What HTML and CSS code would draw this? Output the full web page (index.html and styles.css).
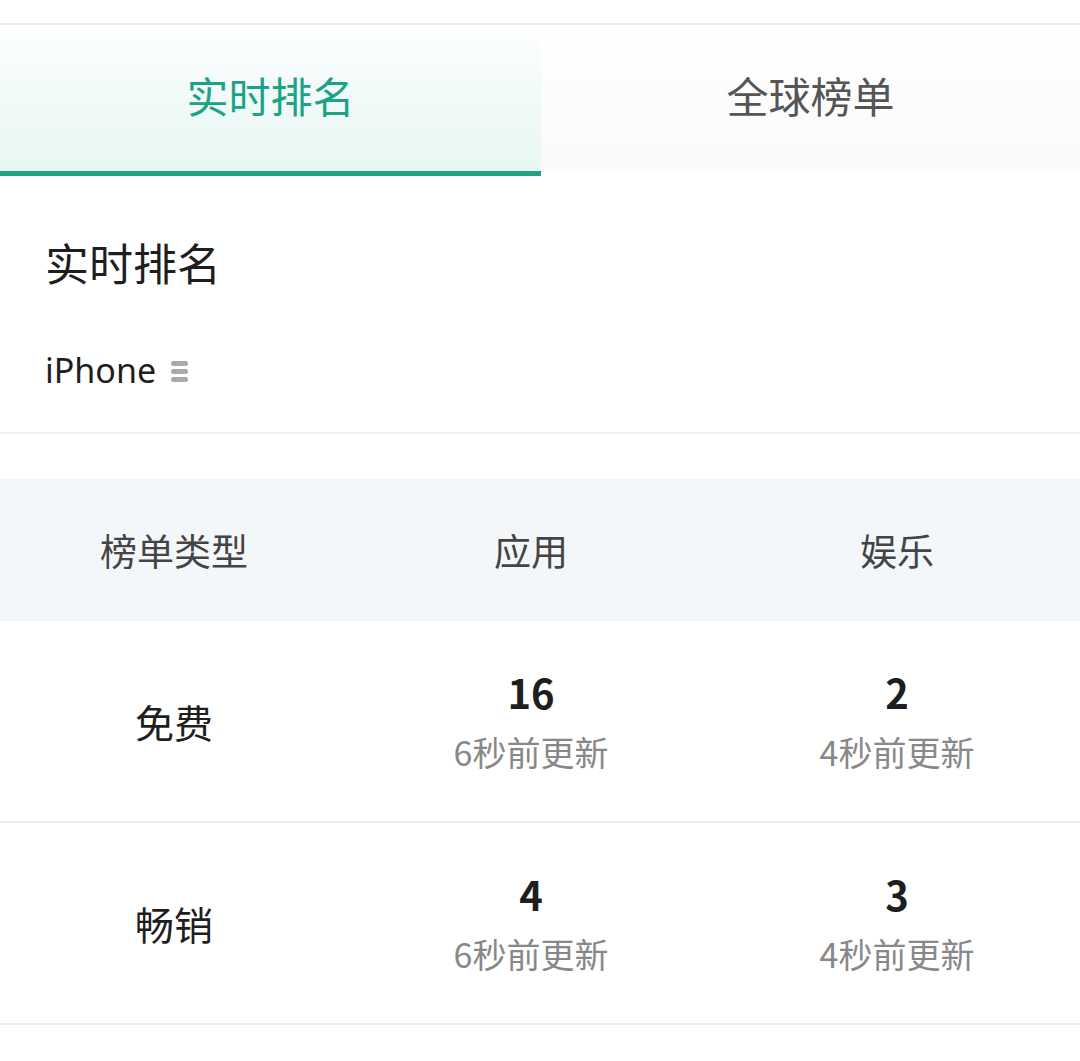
FILE: index.html
```html
<!DOCTYPE html>
<html lang="zh-CN">
<head>
<meta charset="utf-8">
<link rel="stylesheet" href="styles.css">
</head>
<body>
<div class="page">
  <div class="topbar"></div>
  <div class="tabs">
    <div class="tab active">实时排名</div>
    <div class="tab">全球榜单</div>
  </div>
  <div class="intro">
    <div class="title">实时排名</div>
    <div class="device">
      <span>iPhone</span>
      <span class="menu-icon"><i></i><i></i><i></i></span>
    </div>
  </div>
  <div class="table">
    <div class="row head">
      <div class="cell">榜单类型</div>
      <div class="cell">应用</div>
      <div class="cell">娱乐</div>
    </div>
    <div class="row body">
      <div class="cell label">免费</div>
      <div class="cell stat"><div class="num">16</div><div class="sub">6秒前更新</div></div>
      <div class="cell stat"><div class="num">2</div><div class="sub">4秒前更新</div></div>
    </div>
    <div class="row body">
      <div class="cell label">畅销</div>
      <div class="cell stat"><div class="num">4</div><div class="sub">6秒前更新</div></div>
      <div class="cell stat"><div class="num">3</div><div class="sub">4秒前更新</div></div>
    </div>
  </div>
</div>
</body>
</html>
```

FILE: styles.css
```css
* { box-sizing: border-box; }
html, body { margin: 0; padding: 0; background: #ffffff; }
body {
  font-family: "Noto Sans CJK SC", "Noto Sans", sans-serif;
  color: #222222;
}
.page { width: 1080px; }
.topbar {
  height: 25px;
  border-bottom: 2px solid #ececec;
}
.tabs {
  display: grid;
  grid-template-columns: 541px 1fr;
  height: 151px;
}
.tab {
  display: flex;
  align-items: center;
  justify-content: center;
  padding-bottom: 8px;
  font-size: 42px;
  color: #555555;
  background: linear-gradient(to bottom, #ffffff 0%, #fafafa 100%);
  border-bottom: 5px solid transparent;
}
.tab.active {
  color: #1ba385;
  background: linear-gradient(to bottom, #ffffff 0%, #f3fbfa 40%, #e8f7f4 100%);
  border-bottom-color: #1fa383;
}
.intro {
  padding: 56px 0 37px 45px;
  border-bottom: 2px solid #efefef;
}
.title {
  font-size: 44px;
  line-height: 60px;
  color: #1e1e1e;
}
.device {
  margin-top: 53px;
  display: flex;
  align-items: center;
  gap: 15px;
  font-size: 34px;
  line-height: 50px;
  color: #1e1e1e;
  font-family: "Noto Sans", "Noto Sans CJK SC", sans-serif;
}
.menu-icon {
  display: flex;
  flex-direction: column;
  gap: 3px;
  width: 17px;
  margin-top: 2px;
}
.menu-icon i {
  display: block;
  height: 5px;
  border-radius: 3px;
  background: #a9a9a9;
}
.table { margin-top: 45px; }
.row {
  display: grid;
  grid-template-columns: 348px 366px 366px;
}
.row.head {
  height: 142px;
  background: #f4f7fa;
}
.row.head .cell {
  font-size: 37px;
  color: #444444;
}
.row.body {
  height: 202px;
  border-bottom: 2px solid #eeeeee;
}
.cell {
  display: flex;
  align-items: center;
  justify-content: center;
}
.cell.label {
  font-size: 39px;
  color: #1e1e1e;
}
.cell.stat {
  flex-direction: column;
  gap: 12px;
}
.num {
  font-size: 40px;
  font-weight: 700;
  line-height: 50px;
  color: #1e1e1e;
}
.sub {
  font-size: 34px;
  line-height: 46px;
  color: #888888;
}
```
